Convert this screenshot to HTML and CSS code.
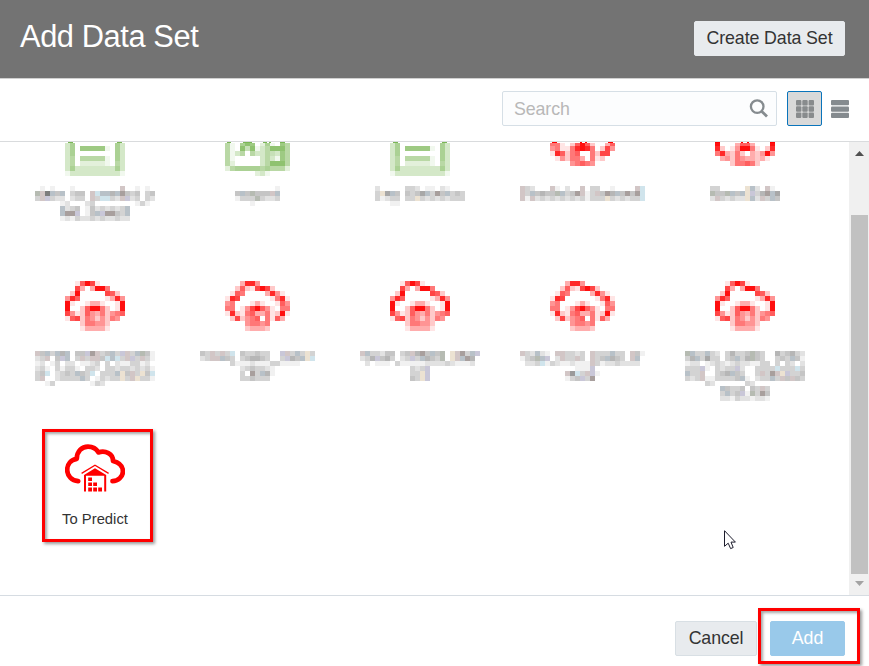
FILE: index.html
```html
<!DOCTYPE html>
<html lang="en">
<head>
<meta charset="utf-8">
<title>Add Data Set</title>
<link rel="stylesheet" href="styles.css">
</head>
<body>
<div class="dialog">
  <header class="header">
    <h1 class="title">Add Data Set</h1>
    <button class="btn create">Create Data Set</button>
  </header>
  <div class="toolbar">
    <label class="search">
      <span class="placeholder">Search</span>
      <svg width="20" height="20" viewBox="0 0 20 20" aria-hidden="true"><circle cx="8.2" cy="7.6" r="6.3" fill="none" stroke="#858b8f" stroke-width="2.3"/><path d="M12.6 12.2L18 17.4" stroke="#858b8f" stroke-width="2.8"/></svg>
    </label>
    <button class="view selected" aria-label="Grid view">
      <svg width="18" height="18" viewBox="0 0 18 18" fill="#888b8d"><rect width="5.4" height="5.4" rx="1"/><rect x="6.3" width="5.4" height="5.4" rx="1"/><rect x="12.6" width="5.4" height="5.4" rx="1"/><rect y="6.3" width="5.4" height="5.4" rx="1"/><rect x="6.3" y="6.3" width="5.4" height="5.4" rx="1"/><rect x="12.6" y="6.3" width="5.4" height="5.4" rx="1"/><rect y="12.6" width="5.4" height="5.4" rx="1"/><rect x="6.3" y="12.6" width="5.4" height="5.4" rx="1"/><rect x="12.6" y="12.6" width="5.4" height="5.4" rx="1"/></svg>
    </button>
    <button class="view" aria-label="List view">
      <svg width="18" height="18" viewBox="0 0 18 18" fill="#858b8f"><rect width="18" height="5.3" rx="1"/><rect y="6.4" width="18" height="5.3" rx="1"/><rect y="12.8" width="18" height="5.2" rx="1"/></svg>
    </button>
  </div>
  <div class="content">
    <div class="items" id="items">
      <div class="item last">
        <svg width="60" height="48" viewBox="0 0 60 48" aria-hidden="true">
          <path d="M13.2 37.2C6.8 36.5 2.2 32 2.2 26C2.2 20 6 15.6 11.8 14.8C11.8 7.5 16.8 2.6 23 2.6C28 2.6 31.5 5 33.4 8.4C40.3 6.2 48.2 9.5 48 17C54.2 18.5 57.9 22.3 57.9 27.5C57.9 33 53 37 47.5 37.2" fill="none" stroke="#f00" stroke-width="4.7" stroke-linecap="round" stroke-linejoin="round"/>
          <path d="M16.6 29.4L30 21.3L43.6 29.4" fill="none" stroke="#f00" stroke-width="1.3"/>
          <path d="M19 31L30 24.3L41.2 31V47.6H39.2V31.8H21V47.6H19Z" fill="#f00"/>
          <path d="M23.2 33.6h3.8v3.5h-3.8zM23.2 38.4h3.8v3.7h-3.8zM23.2 43.4h3.8v4.2h-3.8zM28.2 38.4h3.8v3.7h-3.8zM28.2 43.4h3.8v4.2h-3.8zM33.2 43.4h3.8v4.2h-3.8z" fill="#f00"/>
        </svg>
        <span class="name">To Predict</span>
        <span class="marker item-marker"></span>
      </div>
    </div>
    <div class="scrollbar">
      <svg width="9" height="5" viewBox="0 0 9 5"><path d="M0 5L4.5 0L9 5Z" fill="#505050"/></svg>
      <div class="thumb"></div>
      <svg width="9" height="5" viewBox="0 0 9 5"><path d="M0 0L4.5 5L9 0Z" fill="#a3a3a3"/></svg>
    </div>
    <svg class="cursor" width="14" height="21" viewBox="0 0 14 21"><path d="M.5 .7V16.3L4.2 13.2L6.6 18.6L9.2 17.5L7 12.1H11.4Z" fill="#fff" stroke="#1c1c2c" stroke-width="1"/></svg>
  </div>
  <footer class="footer">
    <button class="btn cancel">Cancel</button>
    <span class="add-wrap"><button class="btn add">Add</button><span class="marker add-marker"></span></span>
  </footer>
</div>
<script src="mosaic.js"></script>
</body>
</html>
```
FILE: styles.css
```css
* { box-sizing: border-box; }
body { margin: 0; background: #fff; font-family: "Liberation Sans", Arial, sans-serif; color: #333; }
.dialog { width: 869px; height: 666px; overflow: hidden; display: flex; flex-direction: column; }
.header { height: 79px; flex: none; background: #737373; border-bottom: 1px solid #d0d0d0; display: flex; justify-content: space-between; align-items: flex-start; padding: 21px 24px 0 20px; }
.title { margin: -1px 0 0; font-size: 30.8px; letter-spacing: -0.4px; line-height: 34px; font-weight: 400; color: #fff; }
.btn { height: 35px; font: 17.8px/33px "Liberation Sans", Arial, sans-serif; letter-spacing: -0.1px; border: 1px solid #d8dfe4; border-radius: 2px; background: #e8ebee; color: #333; padding: 0; text-align: center; }
.create { width: 151px; border-color: #e8ebee; }
.toolbar { height: 63px; flex: none; border-bottom: 1px solid #d9dbdd; display: flex; justify-content: flex-end; padding: 12px 12px 0 0; }
.search { width: 275px; height: 35px; border: 1px solid #d6dfe6; border-radius: 2px; background: #fcfdfe; display: flex; justify-content: space-between; align-items: center; padding: 0 7px 0 11px; margin-right: 10px; }
.placeholder { font-size: 17.8px; letter-spacing: -0.1px; margin-top: 2px; color: #b8b8b8; }
.view { width: 35px; height: 35px; padding: 0; border: 1px solid transparent; border-radius: 2px; background: none; display: flex; align-items: center; justify-content: center; }
.view.selected { border-color: #0a74bb; background: #d9d9d9; }
.content { height: 454px; flex: none; position: relative; display: flex; justify-content: space-between; border-bottom: 1px solid #d6dce2; }
.items { display: grid; grid-template-columns: repeat(5, 162.5px); grid-template-rows: 139px 163px 151px; margin-left: 13.75px; }
.item { position: relative; display: flex; flex-direction: column; align-items: center; }
.item svg { display: block; flex: none; }
.icon-slot { height: 70px; flex: none; }
.top .icon-slot { height: 44px; }
.name { font-size: 14.8px; line-height: 18px; margin-top: 18px; color: #333; }
.marker { position: absolute; border: 3px solid #f00; box-shadow: 2px 2px 3px rgba(0,0,0,.4), inset 2px 2px 3px rgba(0,0,0,.35); }
.item-marker { left: 28.25px; top: -15px; width: 111px; height: 113px; }
.scrollbar { width: 20px; background: #f0f0f0; display: flex; flex-direction: column; align-items: center; padding-top: 9px; }
.thumb { width: 17px; height: 359px; margin: 59px 0 7px 1px; background: #c1c1c1; }
.cursor { position: absolute; left: 724px; top: 388px; }
.footer { display: flex; justify-content: flex-end; padding: 25px 24px 0 0; flex: 1; }
.cancel { width: 82px; margin-right: 13px; }
.add-wrap { position: relative; height: 35px; }
.add { width: 75px; background: #99c9ea; border-color: #99c9ea; color: #fff; display: block; }
.add-marker { left: -12px; top: -13px; width: 102px; height: 56px; }
```
FILE: mosaic.js
```js
const CELL = 5;
const TINTS = { r: '#d2c6c6', b: '#b8c1c8', t: '#d0e4ec', p: '#c9c7d8', g: '#b6bbb2', y: '#ece2d2', k: '#a89f9d' };

// Each row is a string of cells: digits are strengths of the base colour, letters are tints.
function mosaic(rows, base, top = 0, strips = []) {
  const w = rows[0].length * CELL, h = rows.length * CELL - top;
  let out = `<svg width="${w}" height="${h}" viewBox="0 ${top} ${w} ${h}" shape-rendering="crispEdges" aria-hidden="true">`;
  rows.forEach((row, y) => [...row].forEach((c, x) => {
    if (c === '0') return;
    const fill = TINTS[c] ? `fill="${TINTS[c]}"` : `fill="${base}" fill-opacity="${Math.min(1, c * 0.105).toFixed(2)}"`;
    const cut = top && y === 0 ? 2 : 0;
    out += `<rect x="${x * CELL}" y="${y * CELL + cut}" width="5" height="${CELL - cut}" ${fill}/>`;
  }));
  strips.forEach(([x, n]) => { out += `<rect x="${x}" y="1" width="${n}" height="1" fill="${base}"/>`; });
  return out + '</svg>';
}

const RED = '#ff0000', GREEN = '#7ab655', GRAY = '#757575';
const cloudA = mosaic(['001697100000','007303995000','029000007620','486000001384','910013310019','900269952019','741264352456','167254242540','000255442000','000133331000'], RED);
const cloudB = mosaic(['0003884000000','0026217972000','0165000038410','1870000001581','4500013100164','5501479641055','1821563351291','0272456051630','0000455450000','0000233320000'], RED);
const cutA = mosaic(['900036630009','820149951028','583252032494','034254332310','000255652000'], RED, 1, [[0,5],[26,2],[32,2],[55,5]]);
const cutB = mosaic(['5510269620036','4511589850274','1862560052770','0142553051200','0000456540000'], RED, 1, [[2,5],[30,2],[35,2],[58,5]]);
const sheet = mosaic(['360000000063','360777771063','360000000063','350555551063','350222221053','363333333363','133333333331'], GREEN, 1, [[3,5],[52,5]]);
const chart = mosaic(['5106870261075','5108481358885','5135053354375','5100000353175','5200000358885','2566666565552','0000002310000'], GREEN, 1, [[2,4],[18,9],[38,4],[44,2],[55,5]]);

const items = [
  [sheet, ['010100010' + '00000000' + 'r001010','gr9b4b03440rtbb5bk434034','3rp32202330r3tt32rp23032','000001200023000000001310','00000b234014232323b00000','00000bkkp014bpkk43b00000','000001213223232232200000']],
  [chart, ['000000001','4b4g444rb','1333g3223','000100000']],
  [sheet, ['200000332011021000','3y6b404346b3k4b343','31233033y323232333','000110000000000000']],
  [cutB, ['r32000r10200r0330010000rt','r3b4544gb34kr13r4k5b4k4kt','r1r23232323231333y323233t']],
  [cutA, ['3300000yb20r10','g44gb4byp35kb6','2r32322yb2r3b4']],
  [cloudA, ['r4b3b5b044pkr34b3pr3bg41','23r04pb03r3rr4tbt3rp3r31','120130220112303021133120','231031331033203323323231','34t02343b43t0333by4r3y4t','3r0023333b3013233y3ry331','001300000001320000000000']],
  [cloudB, ['43r3r3t043343300pr3b3y3','23rrb430345543003p54byt','00000031112111331111000','00000000234332100000000','0000000030k3b5100000000','00000000334333000000000']],
  [cloudA, ['rb33244034r5k4b4g0yrk3bp','235p453023p3b543g0yrbk50','020111031111122223211120','0000000000323p0000000000','000000000033yp0000000000','000000000043yp0000000000']],
  [cloudB, ['r32b210rr33230r333b330r41','134gbp02r33r30r34b5430rb0','0223t132112111r3122322220','00000000000111p0000000000','000000000r7t3rp1000000000','000000000134p3k0000000000']],
  [cloudA, ['gb33b32035334g4300534532','35b3633034b35g4300343b41','122012321232211330303202','333p103233p2003333t333t3','b33r00345b43003r3kryp334','323r1133334b10233b3r4r43','000032000000320000000000','0000000b4334043r30000000','00000003b34p1g3k40000000','000000022132212210000000']]
];

document.getElementById('items').insertAdjacentHTML('afterbegin', items.map(([icon, label], i) =>
  `<div class="item${i < 5 ? ' top' : ''}"><div class="icon-slot">${icon}</div>${mosaic(label, GRAY)}</div>`).join(''));
```
